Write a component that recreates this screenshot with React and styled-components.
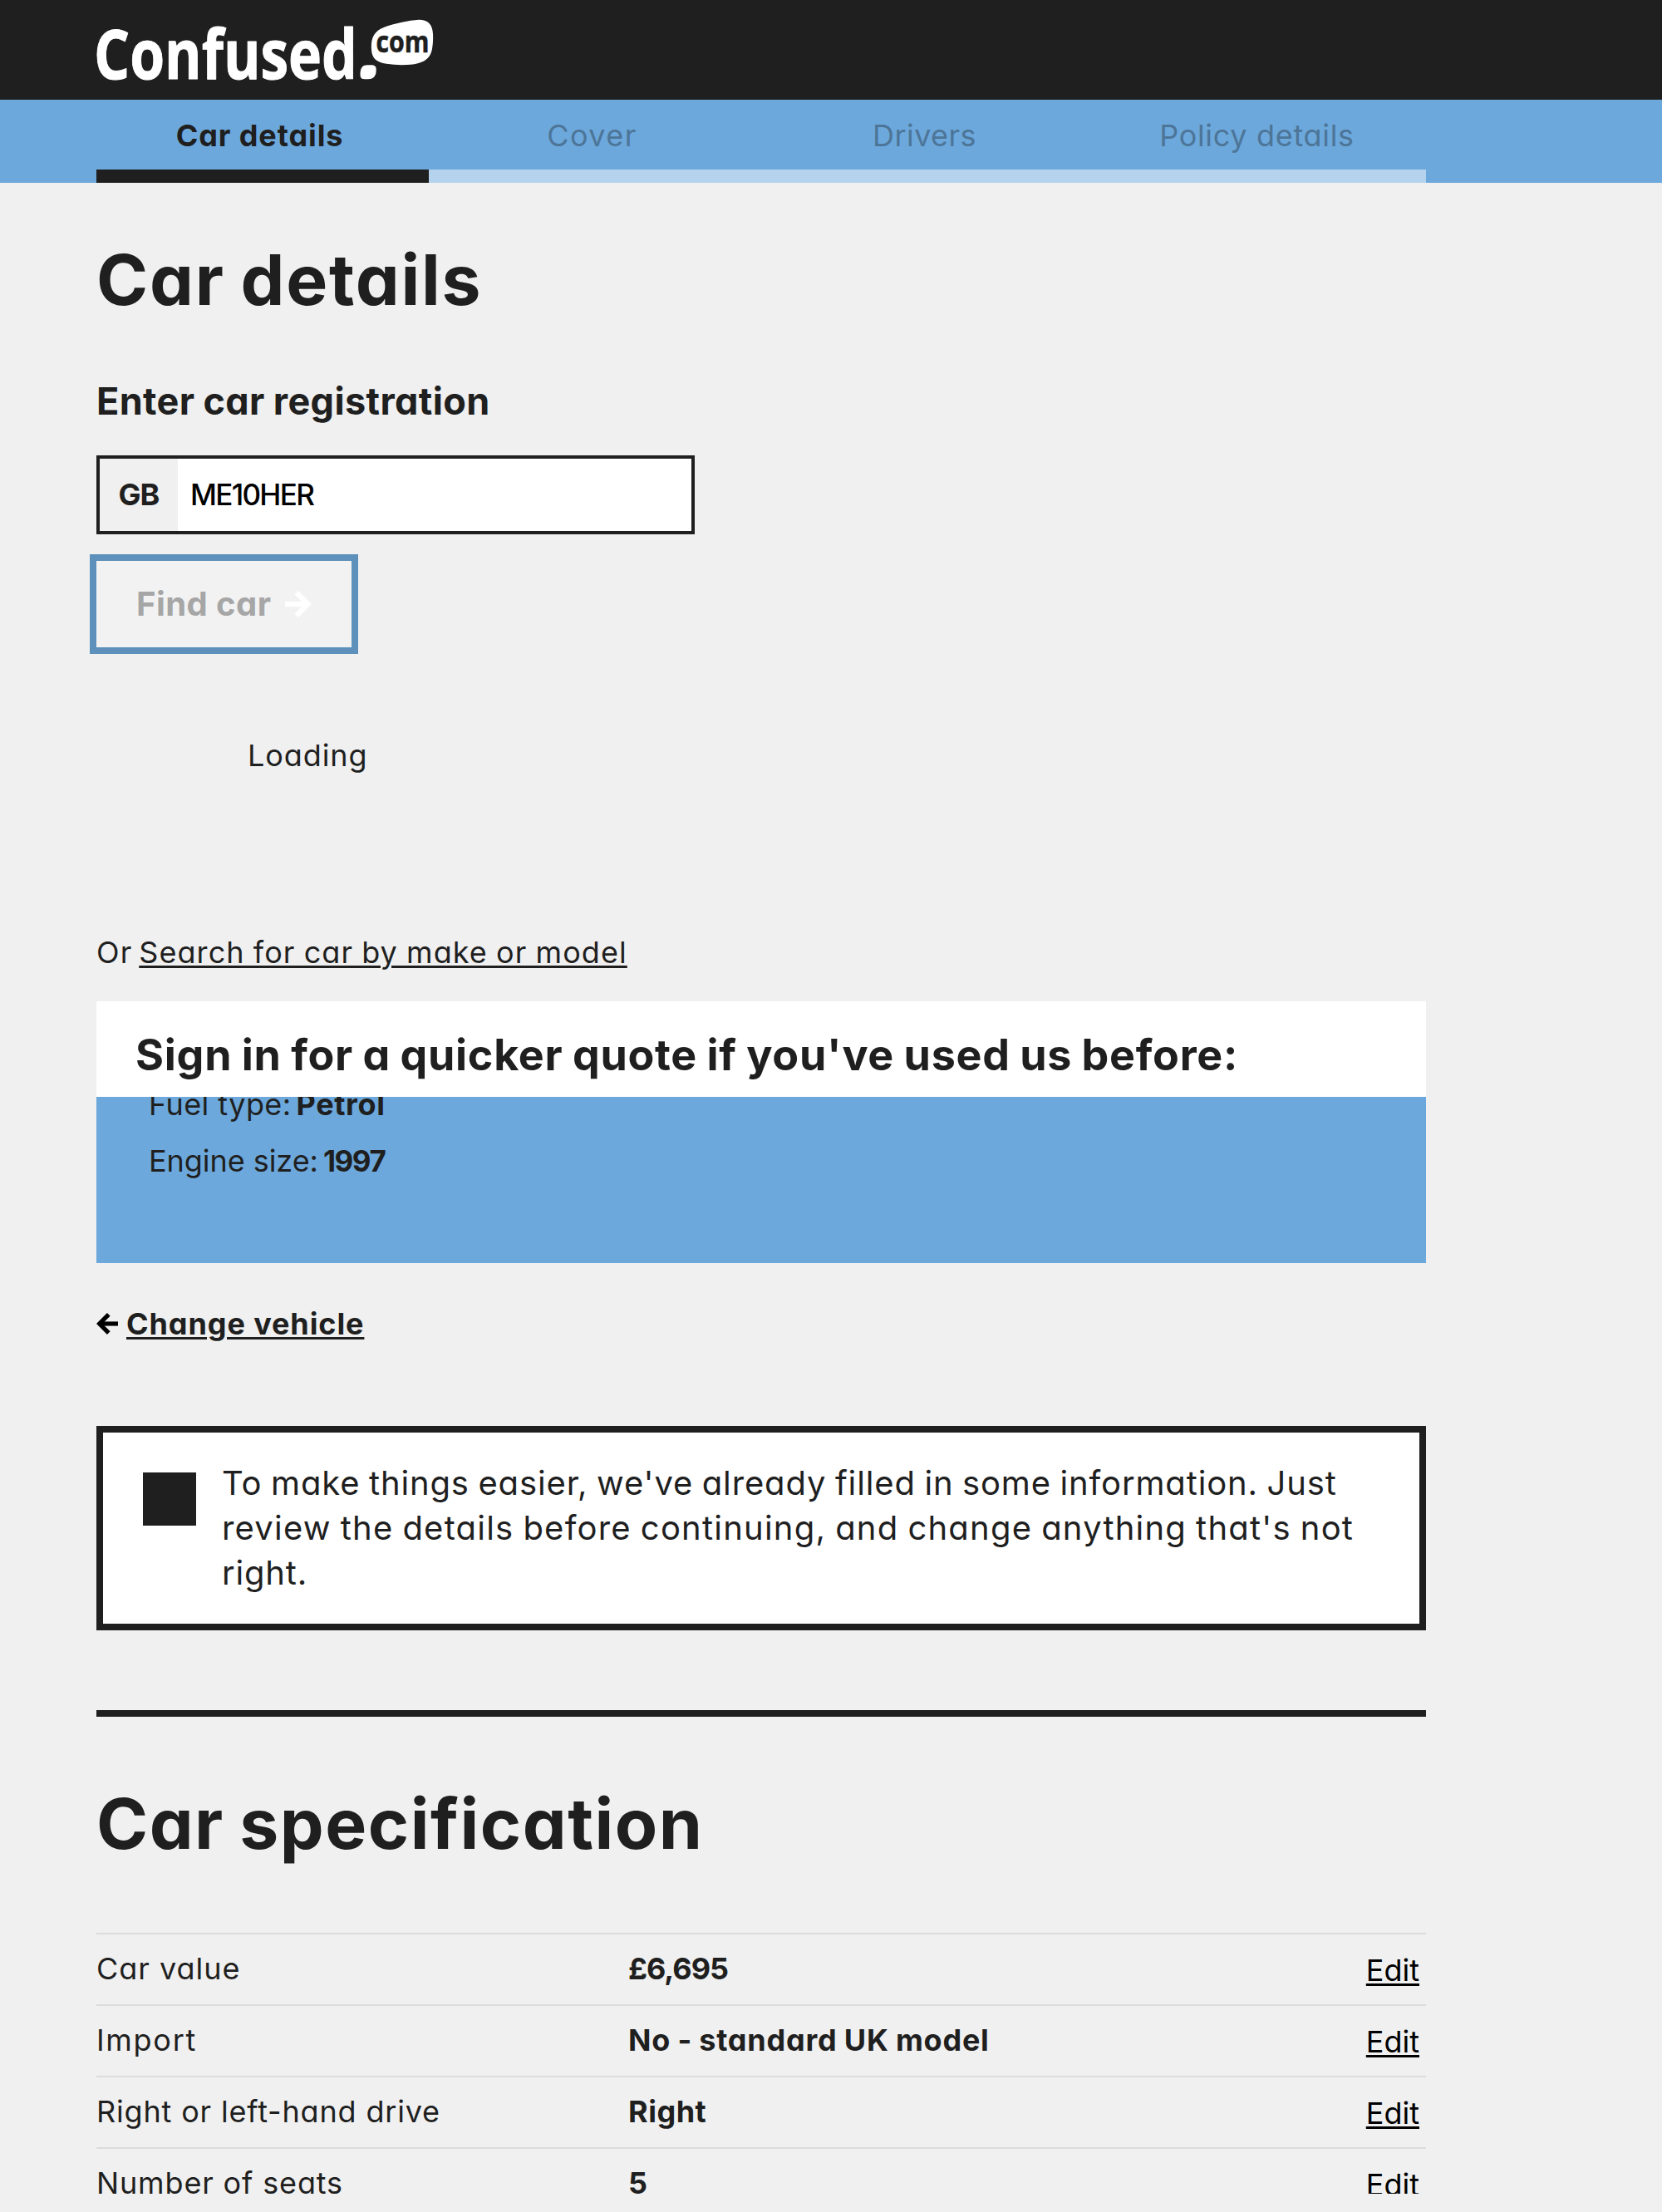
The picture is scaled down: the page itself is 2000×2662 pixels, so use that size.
import React from "react";
import styled, { createGlobalStyle } from "styled-components";

const ink = "#1f1f1f";
const blue = "#6ca8db";
const grey = "#f0f0f0";

const GlobalStyle = createGlobalStyle`
  * { box-sizing: border-box; }
  body {
    margin: 0;
    background: ${grey};
    color: ${ink};
    font-family: Inter, "Liberation Sans", sans-serif;
    font-size: 36px;
    line-height: 44px;
    font-feature-settings: "cv11";
  }
  h1, h2, h3, p, dl, dt, dd { margin: 0; }
`;

const Page = styled.div`
  height: 2640px;
  overflow: hidden;
`;

/* Text run with its own tracking and weight */
const Text = styled.span`
  display: ${(p) => (p.$block ? "block" : "inline")};
  font-size: ${(p) => (p.$size ? `${p.$size}px` : "inherit")};
  font-weight: ${(p) => p.$weight || "inherit"};
  letter-spacing: ${(p) => p.$track || 0}px;
  word-spacing: ${(p) => p.$space || 0}px;
  white-space: nowrap;
`;

const Header = styled.header`
  height: 120px;
  padding-left: 112px;
  background: ${ink};
  svg { display: block; }
`;

const Nav = styled.nav`
  height: 100px;
  padding-left: 116px;
  background: ${blue};
`;

const Tabs = styled.div`
  display: grid;
  grid-template-columns: repeat(4, 400px);
`;

const Tab = styled.div`
  height: 100px;
  padding-right: 7px;
  border-bottom: 16px solid ${(p) => (p.$active ? ink : "#b5d3ed")};
  color: ${(p) => (p.$active ? ink : "#4d7598")};
  font-weight: ${(p) => (p.$active ? 700 : 400)};
  line-height: 86px;
  text-align: center;
`;

const Main = styled.main`
  width: 1600px;
  margin-left: 116px;
`;

const Title = styled.h1`
  margin-top: ${(p) => p.$top}px;
  font-size: 84px;
  font-weight: 700;
  line-height: 100px;
`;

const FieldLabel = styled.h2`
  margin-top: 68px;
  font-size: 45px;
  font-weight: 700;
  line-height: 56px;
`;

const RegInput = styled.div`
  display: flex;
  width: 720px;
  height: 95px;
  margin-top: 37px;
  border: 4px solid ${ink};
  background: #fff;
  line-height: 86px;
`;

const Country = styled.div`
  width: 94px;
  background: ${grey};
  text-align: center;
  font-weight: 700;
`;

const Registration = styled.div`
  padding-left: 15px;
  color: #000;
  font-size: 35px;
  font-weight: 500;
`;

const FindButton = styled.button`
  display: flex;
  align-items: center;
  width: 323px;
  height: 120px;
  margin: 24px 0 0 -8px;
  padding: 0 0 0 48px;
  border: 8px solid #5d90ba;
  background: #f2f2f2;
  color: #a6a6a6;
  font: inherit;
  font-feature-settings: inherit;
  font-size: 40px;
  font-weight: 700;
  svg { margin-left: 17px; }
`;

const Loading = styled.p`
  margin-top: 100px;
  padding-left: 182px;
`;

const SearchLine = styled.p`
  display: flex;
  gap: 8px;
  margin-top: 193px;
`;

const Link = styled.a`
  color: ${(p) => (p.$dark ? "#000" : ink)};
  font-weight: ${(p) => p.$weight || 400};
  letter-spacing: ${(p) => p.$track || 0}px;
  word-spacing: ${(p) => p.$space || 0}px;
  white-space: nowrap;
  text-decoration: underline;
  text-decoration-thickness: 3px;
  text-underline-offset: 3px;
`;

const SignIn = styled.section`
  height: 115px;
  margin-top: 37px;
  padding: 33px 0 0 47px;
  background: #fff;
  h3 {
    font-size: 52px;
    font-weight: 700;
    line-height: 64px;
  }
`;

const Vehicle = styled.section`
  height: 200px;
  overflow: hidden;
  padding-left: 63px;
  background: ${blue};
  dl { margin-top: -25px; }
`;

const Fact = styled.div`
  display: flex;
  gap: 6px;
  line-height: 68px;
`;

const Change = styled.div`
  display: flex;
  align-items: center;
  gap: 10px;
  margin-top: 51px;
`;

const Notice = styled.section`
  display: flex;
  gap: 31px;
  height: 246px;
  margin-top: 101px;
  padding-left: 48px;
  border: 8px solid ${ink};
  background: #fff;
`;

const Square = styled.div`
  width: 64px;
  height: 64px;
  margin-top: 48px;
  background: ${ink};
`;

const NoticeText = styled.p`
  padding-top: 34px;
  font-size: 40px;
  line-height: 54px;
`;

const Rule = styled.div`
  height: 8px;
  margin-top: 96px;
  background: ${ink};
`;

const Table = styled.div`
  margin-top: 81px;
`;

const Row = styled.div`
  display: grid;
  grid-template-columns: 640px 1fr auto;
  height: 86px;
  padding-right: 8px;
  border-top: 2px solid #dcdcdc;
  line-height: 82px;
`;

const EditCell = styled.div`
  line-height: 86px;
`;

const Logo = () => (
  <svg width="416" height="120" viewBox="112 0 416 120" fill="#fff">
    <g fontFamily="'Open Sans', 'Noto Sans', sans-serif" fontWeight="700">
      <text x="113" y="95" fontSize="82" textLength="317" lengthAdjust="spacingAndGlyphs" stroke="#fff" strokeWidth="1" strokeLinejoin="round">
        Confused
      </text>
      <path d="M433.5 90 C433.3 83 435.5 78.3 442 78.3 L447 78.3 C451.5 78.3 452.7 80.5 452.7 84 C452.7 91 450 95.2 443 95.2 L438.5 95.2 C435 95.2 433.6 93.5 433.5 90 Z" />
      <path d="M447 60 C446 46 450 37 463 32.5 C476 28 492 24.5 504 23.8 C515 23.5 520.5 29.5 521 41 C521.3 48 521 53 520 59 C517.5 72 508 76.5 494 77.8 C484 78.6 474 78.2 465 76.8 C453 75 447.5 70 447 60 Z" />
      <text x="452.5" y="63" fontSize="35.5" textLength="64" lengthAdjust="spacingAndGlyphs" fill={ink} stroke={ink} strokeWidth="0.6">
        com
      </text>
    </g>
  </svg>
);

const Arrow = ({ size, color, flip }) => (
  <svg width={size} height={size} viewBox="0 0 32 32" fill="none" stroke={color} strokeWidth="6.4">
    <g transform={flip ? "matrix(-1 0 0 1 32 0)" : undefined}>
      <path d="M0 16 H27" />
      <path d="M13.8 2.3 L27.5 16 L13.8 29.7" />
    </g>
  </svg>
);

const tabs = [
  { label: "Car details", track: 0.9, active: true },
  { label: "Cover", track: 1.5 },
  { label: "Drivers", track: 0.44 },
  { label: "Policy details", track: 0.69 },
];

const notice = [
  { text: "To make things easier, we've already filled in some information. Just", track: 0.86 },
  { text: "review the details before continuing, and change anything that's not", track: 1.22 },
  { text: "right.", track: 0.8 },
];

const specs = [
  { label: "Car value", lt: 1, value: "£6,695", vt: -1 },
  { label: "Import", lt: 1.7, value: "No - standard UK model", vt: 0.78 },
  { label: "Right or left-hand drive", lt: 0.83, value: "Right", vt: 0.5 },
  { label: "Number of seats", lt: 0.85, value: "5", vt: 0 },
];

export default function App() {
  return (
    <Page>
      <GlobalStyle />
      <Header>
        <Logo />
      </Header>
      <Nav>
        <Tabs>
          {tabs.map((t) => (
            <Tab key={t.label} $active={t.active}>
              <Text $track={t.track}>{t.label}</Text>
            </Tab>
          ))}
        </Tabs>
      </Nav>
      <Main>
        <Title $top={67}>
          <Text $track={1.8} $space={-3}>Car details</Text>
        </Title>
        <FieldLabel>
          <Text $track={0.38} $space={-1}>Enter car registration</Text>
        </FieldLabel>
        <RegInput>
          <Country>
            <Text $track={-1}>GB</Text>
          </Country>
          <Registration>
            <Text $track={-1.7}>ME10HER</Text>
          </Registration>
        </RegInput>
        <FindButton>
          <Text $track={0.43}>Find car</Text>
          <Arrow size={32} color="#fff" />
        </FindButton>
        <Loading>
          <Text $track={0.9}>Loading</Text>
        </Loading>
        <SearchLine>
          <Text $track={1.1}>Or</Text>
          <Link $track={1.07} $space={-1}>Search for car by make or model</Link>
        </SearchLine>
        <SignIn>
          <h3>
            <Text $track={0.71} $space={-1.5}>Sign in for a quicker quote if you've used us before:</Text>
          </h3>
        </SignIn>
        <Vehicle>
          <dl>
            <Fact>
              <Text as="dt" $track={0.43}>Fuel type:</Text>
              <Text as="dd" $weight={700} $track={0.63}>Petrol</Text>
            </Fact>
            <Fact>
              <Text as="dt" $track={-0.05}>Engine size:</Text>
              <Text as="dd" $weight={700} $size={35} $track={-1.45}>1997</Text>
            </Fact>
          </dl>
        </Vehicle>
        <Change>
          <Arrow size={26} color="#000" flip />
          <Link $weight={700} $track={0.9}>Change vehicle</Link>
        </Change>
        <Notice>
          <Square />
          <NoticeText>
            {notice.map((n) => (
              <Text key={n.text} $block $track={n.track} $space={-1.5}>{n.text}</Text>
            ))}
          </NoticeText>
        </Notice>
        <Rule />
        <Title $top={79}>
          <Text $track={1.5} $space={-3}>Car specification</Text>
        </Title>
        <Table>
          {specs.map((s) => (
            <Row key={s.label}>
              <Text $track={s.lt}>{s.label}</Text>
              <Text $weight={700} $track={s.vt} $space={-1}>{s.value}</Text>
              <EditCell>
                <Link $dark>Edit</Link>
              </EditCell>
            </Row>
          ))}
        </Table>
      </Main>
    </Page>
  );
}
